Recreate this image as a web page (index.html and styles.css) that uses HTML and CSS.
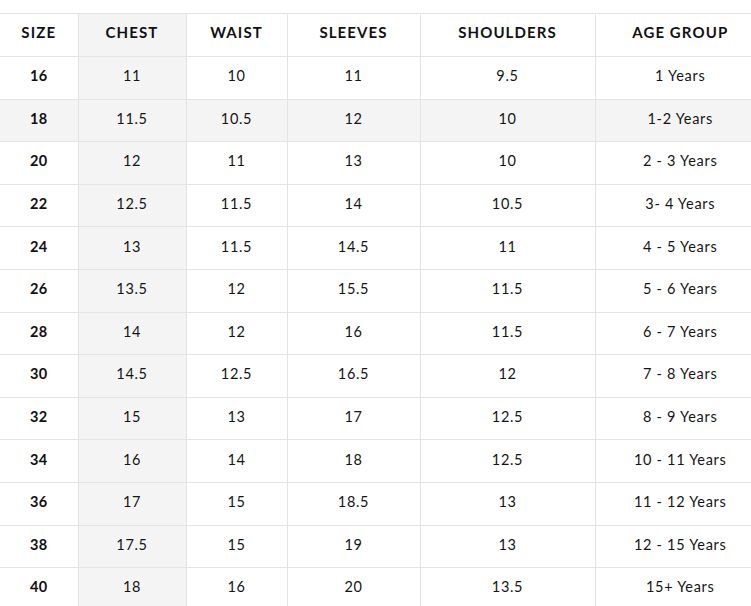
FILE: index.html
```html
<!DOCTYPE html>
<html>
<head>
<meta charset="utf-8">
<link rel="stylesheet" href="styles.css">
</head>
<body>
<div class="wrap">
<table class="size-table">
  <colgroup>
    <col class="c-size"><col class="c-chest"><col class="c-waist"><col class="c-sleeves"><col class="c-shoulders"><col class="c-age">
  </colgroup>
  <thead>
    <tr><th>SIZE</th><th class="hl">CHEST</th><th>WAIST</th><th>SLEEVES</th><th>SHOULDERS</th><th>AGE GROUP</th></tr>
  </thead>
  <tbody>
    <tr><td class="sz">16</td><td class="hl">11</td><td>10</td><td>11</td><td>9.5</td><td>1 Years</td></tr>
    <tr class="row-hl"><td class="sz">18</td><td class="hl">11.5</td><td>10.5</td><td>12</td><td>10</td><td>1-2 Years</td></tr>
    <tr><td class="sz">20</td><td class="hl">12</td><td>11</td><td>13</td><td>10</td><td>2 - 3 Years</td></tr>
    <tr><td class="sz">22</td><td class="hl">12.5</td><td>11.5</td><td>14</td><td>10.5</td><td>3- 4 Years</td></tr>
    <tr><td class="sz">24</td><td class="hl">13</td><td>11.5</td><td>14.5</td><td>11</td><td>4 - 5 Years</td></tr>
    <tr><td class="sz">26</td><td class="hl">13.5</td><td>12</td><td>15.5</td><td>11.5</td><td>5 - 6 Years</td></tr>
    <tr><td class="sz">28</td><td class="hl">14</td><td>12</td><td>16</td><td>11.5</td><td>6 - 7 Years</td></tr>
    <tr><td class="sz">30</td><td class="hl">14.5</td><td>12.5</td><td>16.5</td><td>12</td><td>7 - 8 Years</td></tr>
    <tr><td class="sz">32</td><td class="hl">15</td><td>13</td><td>17</td><td>12.5</td><td>8 - 9 Years</td></tr>
    <tr><td class="sz">34</td><td class="hl">16</td><td>14</td><td>18</td><td>12.5</td><td>10 - 11 Years</td></tr>
    <tr><td class="sz">36</td><td class="hl">17</td><td>15</td><td>18.5</td><td>13</td><td>11 - 12 Years</td></tr>
    <tr><td class="sz">38</td><td class="hl">17.5</td><td>15</td><td>19</td><td>13</td><td>12 - 15 Years</td></tr>
    <tr><td class="sz">40</td><td class="hl">18</td><td>16</td><td>20</td><td>13.5</td><td>15+ Years</td></tr>
  </tbody>
</table>
</div>
</body>
</html>
```

FILE: styles.css
```css
html, body {
  margin: 0;
  padding: 0;
  background: #ffffff;
}
body {
  font-family: "Lato", "Open Sans", sans-serif;
  color: #111;
  overflow: hidden;
}
.wrap {
  width: 751px;
  height: 606px;
  overflow: hidden;
  padding-top: 13px;
  box-sizing: border-box;
}
.size-table {
  border-collapse: collapse;
  table-layout: fixed;
  width: 765px;
}
.c-size { width: 78px; }
.c-chest { width: 108px; }
.c-waist { width: 101px; }
.c-sleeves { width: 133px; }
.c-shoulders { width: 175px; }
.c-age { width: 170px; }

.size-table th,
.size-table td {
  border: 1px solid #e4e4e4;
  text-align: center;
  padding: 0;
  vertical-align: middle;
}
.size-table tr > :first-child { border-left: none; }
.size-table tr > :last-child { border-right: none; }

.size-table thead tr { height: 43px; }
.size-table th {
  font-size: 15px;
  font-weight: 700;
  letter-spacing: 1.1px;
  color: #111;
  padding-bottom: 6px;
}
.size-table tbody tr { height: 42.6px; }
.size-table td {
  font-size: 14.5px;
  letter-spacing: 0.7px;
  color: #151515;
  padding-bottom: 4px;
}
.size-table td.sz {
  font-weight: 700;
  letter-spacing: 0.4px;
  color: #111;
}
.size-table .hl { background: #f4f4f4; }
.size-table .row-hl td { background: #f4f4f4; }
```
